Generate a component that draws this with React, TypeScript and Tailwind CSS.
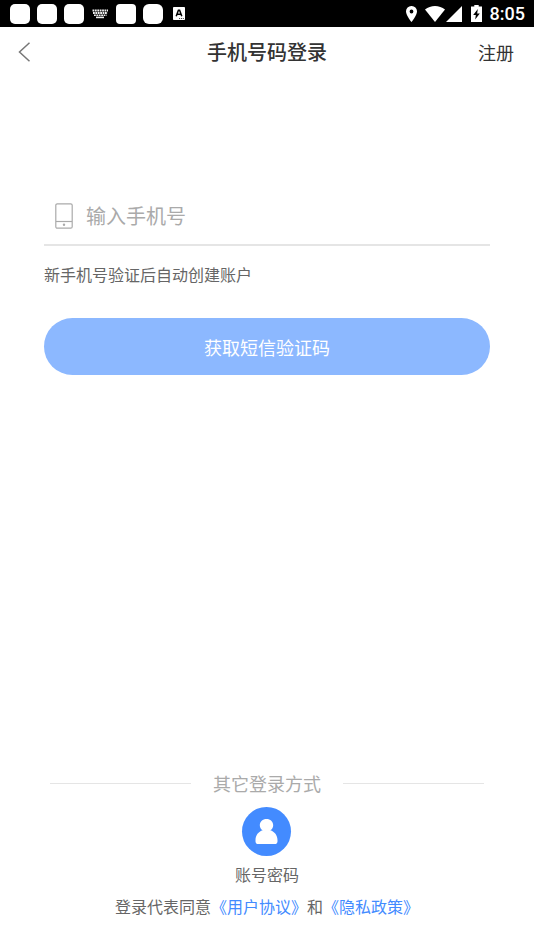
import React from "react";

function KeyboardIcon() {
  return (
    <svg width="16" height="10" viewBox="0 0 16 10" fill="none" stroke="#f0f0f0" aria-hidden="true">
      <path d="M0.5 1.5H16" strokeWidth="1.8" strokeDasharray="1.8 0.6" />
      <path d="M1 4H15.5" strokeWidth="1.8" strokeDasharray="1.8 0.6" />
      <path d="M2 6.3H14.5" strokeWidth="1.5" strokeDasharray="1.8 0.6" />
      <path d="M4 8.4H12" strokeWidth="1.6" />
    </svg>
  );
}

function InputMethodIcon() {
  return (
    <svg width="12" height="13" viewBox="0 0 12 13" aria-hidden="true">
      <rect width="12" height="13" rx="0.8" fill="#fff" />
      <path d="M3.2 9.2 5.4 3.2H6.6L8.8 9.2M4 7.2H8" fill="none" stroke="#000" strokeWidth="1.5" />
      <path d="M6 11.5h1.2M8 11.5h1M9.8 11.5h1" stroke="#000" strokeWidth="0.7" />
    </svg>
  );
}

function StatusBar() {
  return (
    <div className="flex h-[27px] items-center justify-between bg-black pr-[9px] pl-[10px] text-white">
      <div className="flex items-center gap-[7px]">
        <span className="size-5 rounded-[5px] bg-white" />
        <span className="size-5 rounded-[5px] bg-white" />
        <span className="size-5 rounded-[5px] bg-white" />
        <span className="flex w-[18px] justify-center">
          <KeyboardIcon />
        </span>
        <span className="size-5 rounded-[4px] bg-white" />
        <span className="size-5 rounded-[6px] bg-white" />
        <span className="flex w-[18px] justify-center">
          <InputMethodIcon />
        </span>
      </div>
      <div className="flex items-center">
        <svg width="11" height="16" viewBox="0 0 11 16" className="mr-2" aria-hidden="true">
          <path
            fill="#fff"
            fillRule="evenodd"
            d="M5.5 0A5.4 5.4 0 0 0 0 5.5C0 9.5 5.5 16 5.5 16S11 9.5 11 5.5A5.4 5.4 0 0 0 5.5 0Zm0 3.6a1.9 1.9 0 1 1 0 3.8 1.9 1.9 0 0 1 0-3.8Z"
          />
        </svg>
        <svg width="20" height="16" viewBox="0 0 20 16" className="mr-px" aria-hidden="true">
          <path fill="#fff" d="M10 16 0 3.6C5.6-1.1 14.4-1.1 20 3.6Z" />
        </svg>
        <svg width="16" height="16" viewBox="0 0 16 16" className="mr-[9px]" aria-hidden="true">
          <path fill="#fff" d="M16 0V16H0Z" />
        </svg>
        <svg width="11" height="17" viewBox="0 0 10 17" preserveAspectRatio="none" className="mr-2" aria-hidden="true">
          <path fill="#fff" d="M3 0h4v1.6h3V17H0V1.6h3Z" />
          <path fill="#000" d="M6.2 4 2 10h2.4L3.8 14.4 8 8.4H5.6Z" />
        </svg>
        <span className="font-['Roboto',sans-serif] text-lg font-medium leading-5">8:05</span>
      </div>
    </div>
  );
}

export default function App() {
  return (
    <div className="flex min-h-screen flex-col bg-white font-['Noto_Sans_CJK_SC',sans-serif] text-[#666]">
      <StatusBar />
      <header className="grid h-[50px] grid-cols-[1fr_auto_1fr] items-center px-5">
        <button type="button" aria-label="返回" className="justify-self-start">
          <svg width="10" height="20" viewBox="0 0 10 20" fill="none" stroke="#777" strokeWidth="1.5" overflow="visible" aria-hidden="true">
            <path d="M9.500 .8-.5 10l10 9.200" />
          </svg>
        </button>
        <h1 className="text-xl font-medium text-[#333]">手机号码登录</h1>
        <button type="button" className="justify-self-end text-lg text-[#333]">
          注册
        </button>
      </header>

      <main className="px-11 pt-[111px]">
        <form onSubmit={(e) => e.preventDefault()}>
          <div className="flex h-[58px] items-center gap-[13px] border-b-2 border-[#e5e5e5] pl-[11px]">
            <label htmlFor="phone" aria-label="手机号">
              <svg width="18" height="26" viewBox="0 0 18 26" fill="none" stroke="#aaa" strokeWidth="1.2" aria-hidden="true">
                <rect x="0.8" y="0.8" width="16.400" height="24.400" rx="1.500" />
                <path d="M1 18.500H17" />
                <circle cx="9" cy="21.700" r="1.2" fill="#aaa" stroke="none" />
              </svg>
            </label>
            <input
              id="phone"
              type="tel"
              placeholder="输入手机号"
              className="min-w-0 flex-1 text-xl text-[#333] outline-none placeholder:text-[#aaa]"
            />
          </div>
          <p className="mt-4 text-base leading-6">新手机号验证后自动创建账户</p>
          <button type="submit" className="mt-8 h-[57px] w-full rounded-full bg-[#8cb8ff] text-lg text-white">
            获取短信验证码
          </button>
        </form>
      </main>

      <footer className="mt-auto flex flex-col items-center px-[50px] pb-8">
        <div className="flex w-full items-center gap-[22px]">
          <span className="h-px flex-1 bg-[#e5e5e5]" />
          <h2 className="text-lg leading-6 text-[#aaa]">其它登录方式</h2>
          <span className="h-px flex-1 bg-[#e5e5e5]" />
        </div>
        <button type="button" className="mt-3 flex flex-col items-center gap-1.5 text-base leading-6">
          <span className="flex size-[49px] items-center justify-center rounded-full bg-[#438bff]">
            <svg width="23" height="25" viewBox="0 0 23 25" fill="#fff" aria-hidden="true">
              <path d="M11.500 0C7.700 0 4.800 2.700 4.800 6.200c0 2.200 1.100 4 2.900 5.100C3.500 12.600.5 16.400.5 21v1.400c0 1.600 1.200 2.600 2.800 2.600h16.400c1.600 0 2.800-1 2.800-2.600V21c0-4.600-3-8.400-7.200-9.700 1.800-1.100 2.900-2.900 2.900-5.100C18.200 2.700 15.300 0 11.500 0Z" />
            </svg>
          </span>
          账号密码
        </button>
        <p className="mt-2 whitespace-nowrap text-base leading-6">
          登录代表同意
          <a href="#terms" className="text-[#438bff]">《用户协议》</a>
          和
          <a href="#privacy" className="text-[#438bff]">《隐私政策》</a>
        </p>
      </footer>
    </div>
  );
}
